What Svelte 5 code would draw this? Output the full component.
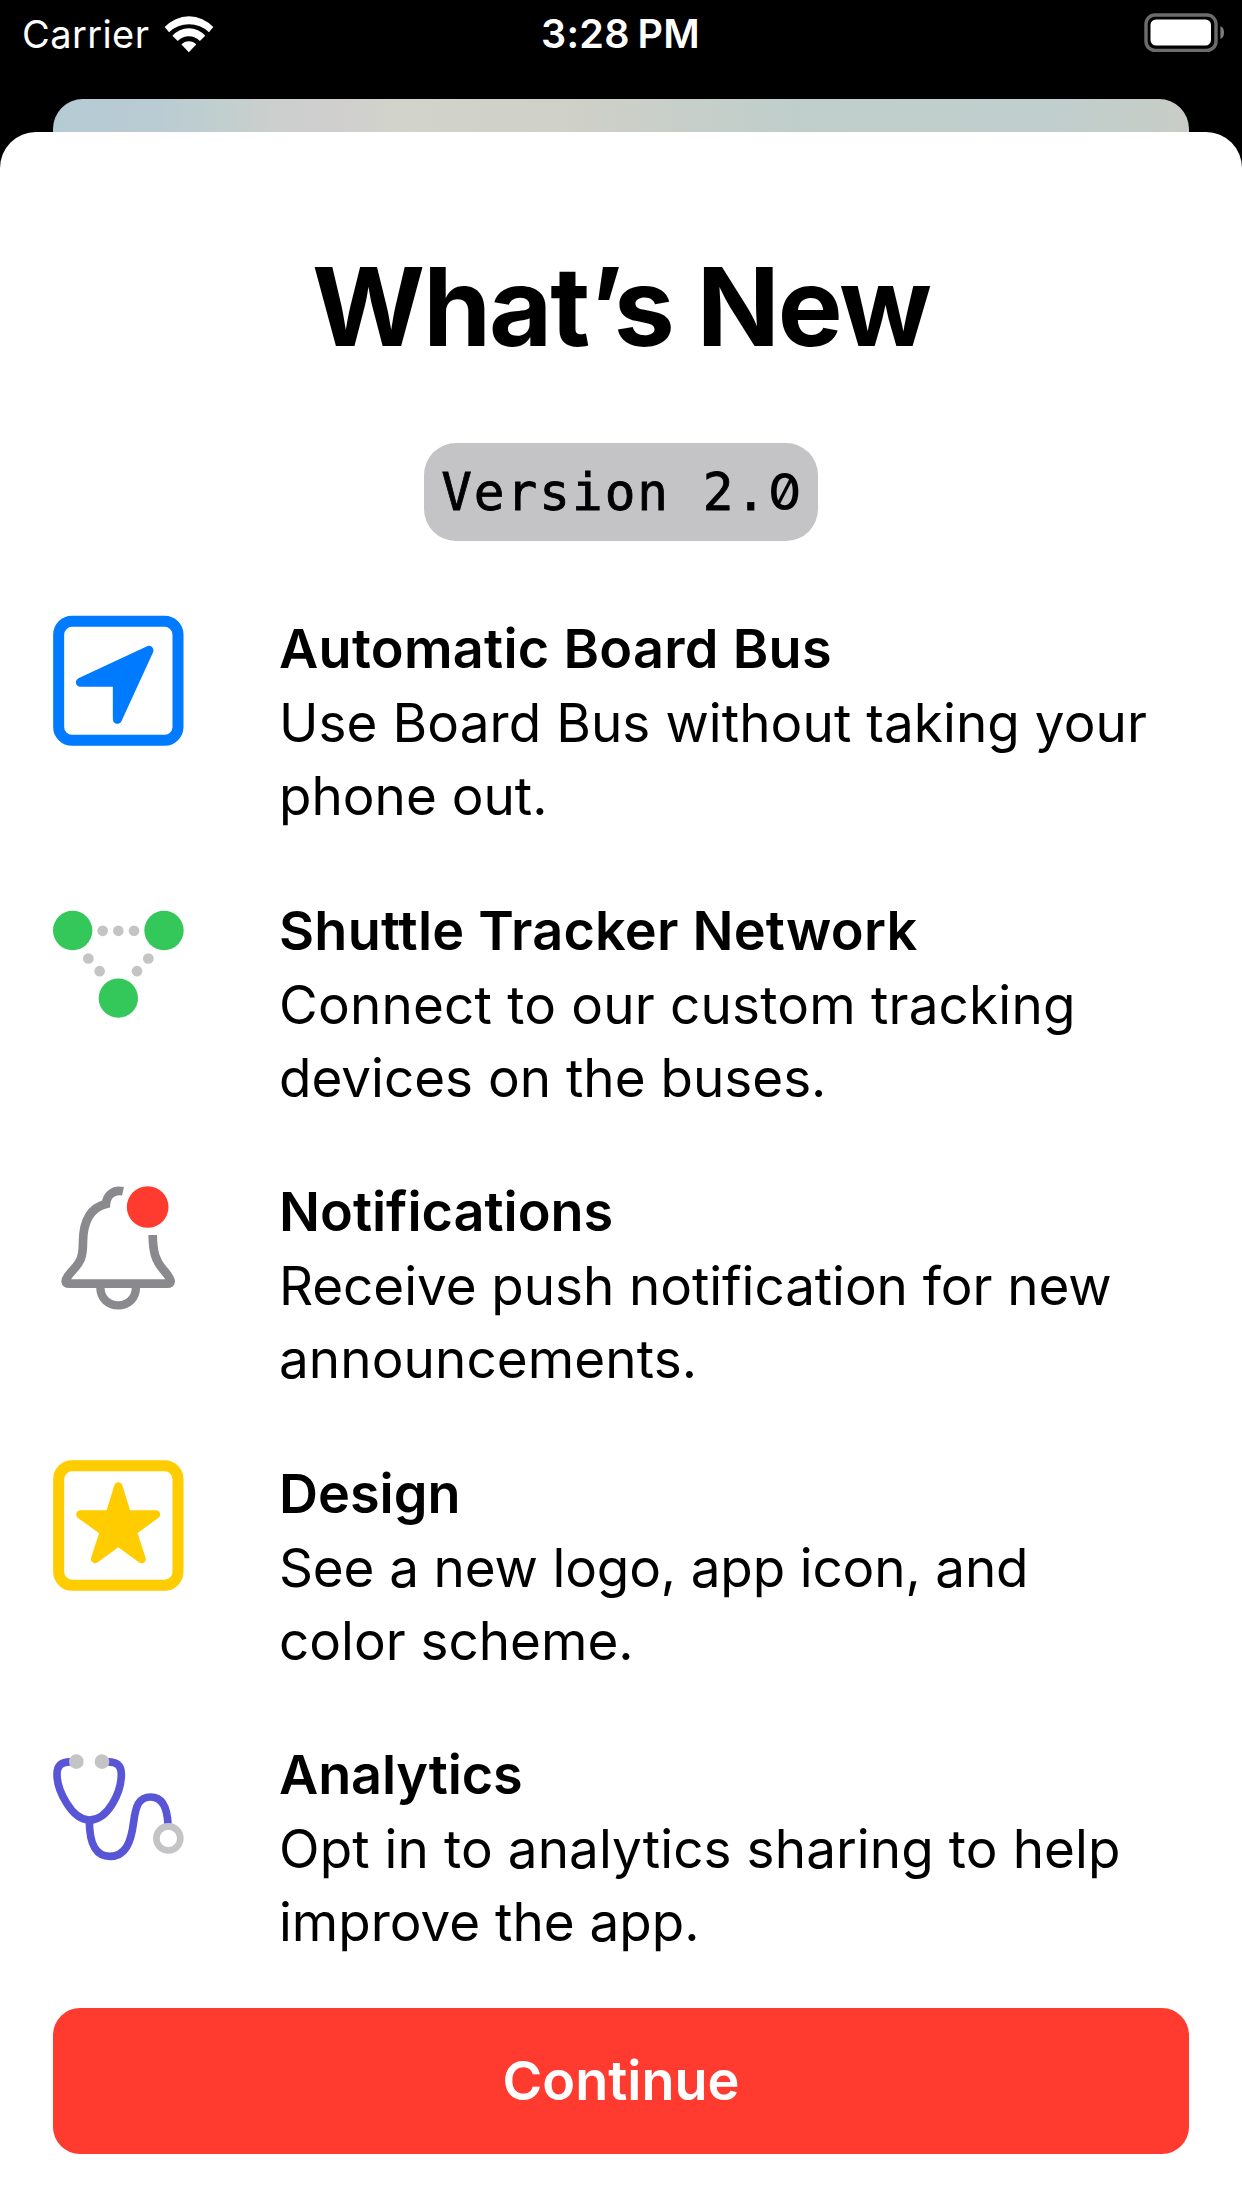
<script>
  // Each text carries its own tracking, in pixels.
  const features = [
    { icon: 'location', title: 'Automatic Board Bus', tracking: 0.28, lines: [['Use Board Bus without taking your', 0.08], ['phone out.', 0]] },
    { icon: 'network', title: 'Shuttle Tracker Network', tracking: 0.22, lines: [['Connect to our custom tracking', 0.2], ['devices on the buses.', 0]] },
    { icon: 'bell', title: 'Notifications', tracking: 0, lines: [['Receive push notification for new', -0.06], ['announcements.', 0.1]] },
    { icon: 'star', title: 'Design', tracking: 0, lines: [['See a new logo, app icon, and', -0.14], ['color scheme.', 0]] },
    { icon: 'stethoscope', title: 'Analytics', tracking: -0.15, lines: [['Opt in to analytics sharing to help', 0.1], ['improve the app.', 0]] }
  ];
</script>

<div class="screen">
  <header class="status">
    <div class="carrier">
      <span>Carrier</span>
      <svg class="wifi" viewBox="495 44 149 113" aria-hidden="true">
        <path d="M497 80A98 98 0 0 1 642 80L629 95A86 86 0 0 0 510 95ZM520 106A64 64 0 0 1 618 106L602 121A46 46 0 0 0 536 121ZM547 132A30 30 0 0 1 591 132L569 155Z" />
      </svg>
    </div>
    <time>3:28 PM</time>
    <svg class="battery" viewBox="0 0 80 40" aria-hidden="true">
      <rect class="shell" x="2" y="2" width="70" height="35.4" rx="9" />
      <rect class="charge" x="6.500" y="6.500" width="60.5" height="26" rx="5.5" />
      <path class="nub" d="M76.4 13.2Q80 14.4 80 19.6T76.4 26Z" />
    </svg>
  </header>
  <div class="behind"></div>
  <main class="sheet">
    <h1>What’s New</h1>
    <div class="version"><span>Version 2.<span class="zero">0</span></span></div>
    <ul class="features">
      {#each features as f}
        <li>
          {#if f.icon === 'location'}
            <svg class="icon blue" viewBox="0 0 540 480" aria-hidden="true">
              <rect class="line" x="86" y="64" width="358" height="357" rx="40" stroke-width="33" />
              <path class="solid" d="M357 151L262 358V247H151Z" stroke-width="27" />
            </svg>
          {:else if f.icon === 'network'}
            <svg class="icon" viewBox="0 -25.5 540 480" aria-hidden="true">
              <g fill="#34c759">
                <circle cx="128" cy="120" r="59" /><circle cx="402" cy="120" r="59" /><circle cx="265" cy="323" r="59" />
              </g>
              <g fill="#c4c4c6">
                <circle cx="218" cy="121" r="16" /><circle cx="265" cy="121" r="16" /><circle cx="312" cy="121" r="16" />
                <circle cx="175" cy="204" r="16" /><circle cx="209" cy="242" r="16" />
                <circle cx="355" cy="204" r="16" /><circle cx="321" cy="242" r="16" />
              </g>
            </svg>
          {:else if f.icon === 'bell'}
            <svg class="icon gray" viewBox="0 -21 540 480" aria-hidden="true">
              <path class="line" d="M279 64C252 58 230 74 228 102C186 112 160 147 159 215C159 262 152 274 130 299C114 317 107 325 107 334Q108 341 118 341H412Q421 341 422 334C421 323 412 313 399 298C378 274 369 250 368 195" stroke-width="26" />
              <path class="line" d="M211 350C211 386 235 406 264.500 406S318 386 318 350" stroke-width="25" />
              <circle cx="353" cy="111" r="62.500" fill="#ff3b30" />
            </svg>
          {:else if f.icon === 'star'}
            <svg class="icon yellow" viewBox="0 -16.5 540 480" aria-hidden="true">
              <rect class="line" x="86" y="46" width="358" height="358" rx="40" stroke-width="33" />
              <path class="solid" d="M265 108L291 192H378L308 243L335 326L265 275L195 326L222 243L151 192H239Z" stroke-width="25" />
            </svg>
          {:else}
            <svg class="icon indigo" viewBox="0 -42 540 480" aria-hidden="true">
              <path class="line" d="M125 66C95 64 81 76 81 103C81 150 125 240 178 240C235 240 274 155 274 103C274 76 260 64 230 66M178 240C178 310 195 349 240 349C285 349 303 310 311 245C317 200 325 171 362 171C395 171 412 200 414 255" stroke-width="23" />
              <g fill="#c4c4c6"><circle cx="139" cy="65" r="22" /><circle cx="216" cy="65" r="22" /></g>
              <circle cx="415" cy="295" r="36" fill="#fff" stroke="#c4c4c6" stroke-width="20" />
            </svg>
          {/if}
          <div class="copy">
            <h2 style:letter-spacing="{f.tracking}px">{f.title}</h2>
            {#each f.lines as [line, tracking]}
              <p style:letter-spacing="{tracking}px">{line}</p>
            {/each}
          </div>
        </li>
      {/each}
    </ul>
    <button type="button">Continue</button>
  </main>
</div>

<style>
  :global(body) { margin: 0; background: #000; }
  .screen {
    width: 1242px;
    height: 2208px;
    background: #000;
    overflow: hidden;
    font-family: Inter, "Liberation Sans", sans-serif;
    display: flex;
    flex-direction: column;
  }
  .status {
    height: 99px;
    flex: none;
    box-sizing: border-box;
    padding: 11px 18px 0 22px;
    display: grid;
    grid-template-columns: 1fr auto 1fr;
    align-items: start;
    color: #fff;
    font-size: 38px;
    line-height: 46px;
  }
  .carrier { display: flex; gap: 15px; }
  .carrier span { letter-spacing: 0.4px; }
  .wifi { width: 50px; height: 38px; margin-top: 4px; fill: #fff; }
  time {
    font-size: 39.5px;
    font-weight: 600;
    white-space: nowrap;
    letter-spacing: 0.3px;
    word-spacing: -2.5px;
    margin-right: 5px;
  }
  .battery { width: 80px; height: 40px; margin-top: 2px; justify-self: end; }
  .shell { fill: none; stroke: #6c6c6c; stroke-width: 3.4; }
  .charge { fill: #fff; }
  .nub { fill: #7c7c7c; }
  .behind {
    flex: none;
    height: 33px;
    margin: 0 53px;
    border-radius: 30px 30px 0 0;
    background: linear-gradient(90deg, #b5cbd4 0, #b9cbd3 100px, #c1cfce 170px, #cbcfce 215px, #d0cfce 290px, #d2d3cb 340px, #cfd0c8 520px, #c0cecb 740px, #c0cecd 1000px, #c8cdc6 1135px);
  }
  .sheet {
    flex: 1;
    border-radius: 36px 36px 0 0;
    background: #fff;
    color: #000;
    display: flex;
    flex-direction: column;
  }
  h1, h2, p, ul { margin: 0; padding: 0; }
  h1 {
    margin-top: 109px;
    font-size: 109px;
    line-height: 130px;
    font-weight: 700;
    letter-spacing: -2px;
    text-align: center;
    white-space: nowrap;
  }
  .version {
    align-self: center;
    margin-top: 72px;
    width: 394px;
    height: 98px;
    border-radius: 32px;
    background: #c4c4c6;
    display: flex;
    align-items: center;
    justify-content: center;
    font: 51px/60px "DejaVu Sans Mono", monospace;
    letter-spacing: 2px;
    white-space: pre;
    -webkit-text-stroke: 0.8px #000;
  }
  .zero {
    display: inline-block;
    width: 32.7px;
    text-align: center;
    font: 500 51px/60px Inter, sans-serif;
    font-feature-settings: "zero";
    letter-spacing: 0;
    -webkit-text-stroke: 0;
  }
  .features { list-style: none; margin-top: 59px; }
  li { display: flex; height: 281.5px; padding-left: 30px; }
  .icon { width: 180px; height: 160px; flex: none; }
  .line { fill: none; stroke: currentColor; }
  .solid { fill: currentColor; stroke: currentColor; stroke-linejoin: round; }
  .blue { color: #007aff; }
  .gray { color: #8a8a8e; }
  .yellow { color: #ffcc00; }
  .indigo { color: #5856d6; }
  .copy { padding: 12px 0 0 69px; white-space: nowrap; }
  h2 { font-size: 54px; line-height: 73px; font-weight: 600; margin-bottom: 2px; }
  p { font-size: 53px; line-height: 73px; }
  button {
    align-self: center;
    width: 1136px;
    height: 146px;
    border: 0;
    border-radius: 27px;
    background: #ff3b30;
    color: #fff;
    font: 600 54px/73px Inter, sans-serif;
  }
</style>
